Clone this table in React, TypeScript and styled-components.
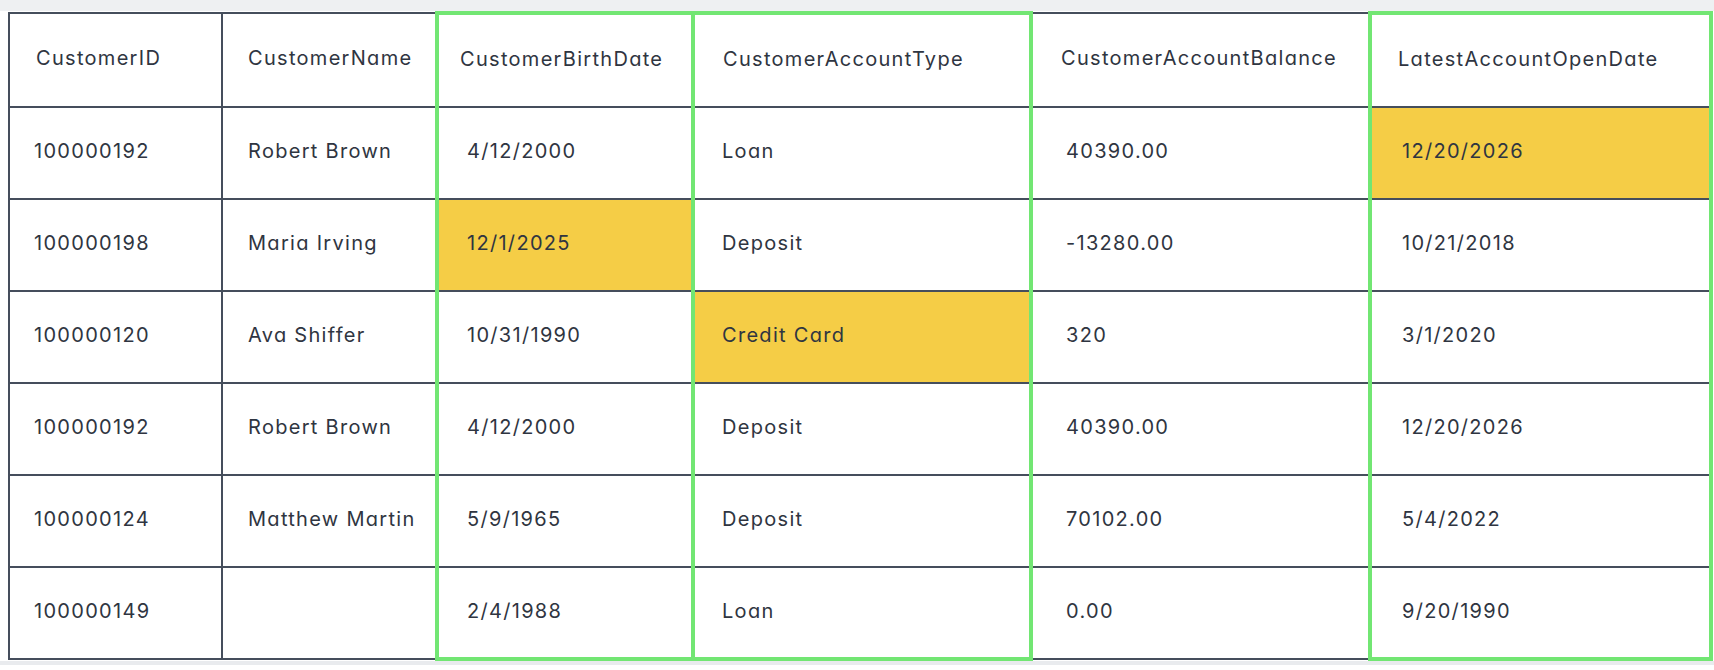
import React from "react";
import styled, { createGlobalStyle } from "styled-components";

const GlobalStyle = createGlobalStyle`
  html, body {
    margin: 0;
    padding: 0;
    background: #ffffff;
  }
  body {
    font-family: Inter, "Noto Sans", "Liberation Sans", sans-serif;
    font-feature-settings: "cv11" 1;
    color: #2f3541;
  }
`;

const Page = styled.div`
  width: 1714px;
  height: 670px;
  display: flex;
  flex-direction: column;
  background: #ffffff;
`;

const TopStrip = styled.div`
  height: 11px;
  background: #eef0f2;
  flex: none;
`;

const TableWrap = styled.div`
  padding: 0 0 0 8px;
  flex: none;
`;

const BottomStrip = styled.div`
  height: 4px;
  background: #e9ebee;
  flex: none;
`;

const Table = styled.table`
  border-collapse: collapse;
  table-layout: fixed;
  width: 1703px;
  border: 2px solid #454e5c;
`;

const Col = styled.col<{ $w: number }>`
  width: ${(p) => p.$w}px;
`;

const Row = styled.tr<{ $h: number }>`
  height: ${(p) => p.$h}px;
`;

const BORDER = "2px solid #454e5c";
const GREEN = "4px solid #72e673";

const Cell = styled.td<{
  $pad: number;
  $green?: boolean;
  $first?: boolean;
  $last?: boolean;
  $hl?: boolean;
}>`
  border: ${BORDER};
  ${(p) => (p.$green ? `border-left: ${GREEN}; border-right: ${GREEN};` : "")}
  ${(p) => (p.$green && p.$first ? `border-top: ${GREEN};` : "")}
  ${(p) => (p.$green && p.$last ? `border-bottom: ${GREEN};` : "")}
  background: ${(p) => (p.$hl ? "#f5cd46" : "#ffffff")};
  padding: 0 0 4px ${(p) => p.$pad}px;
  font-size: 20px;
  font-weight: 400;
  letter-spacing: 1.3px;
  color: #2f3541;
  vertical-align: middle;
  white-space: nowrap;
  overflow: hidden;
  text-align: left;
`;

const HeadCell = styled(Cell).attrs({ as: "th" })`
  font-weight: 400;
`;

type Column = {
  key: string;
  width: number;
  headPad: number;
  dataPad: number;
  green: boolean;
};

const columns: Column[] = [
  { key: "CustomerID", width: 213, headPad: 26, dataPad: 24, green: false },
  { key: "CustomerName", width: 215, headPad: 25, dataPad: 25, green: false },
  { key: "CustomerBirthDate", width: 256, headPad: 21, dataPad: 28, green: true },
  { key: "CustomerAccountType", width: 338, headPad: 28, dataPad: 27, green: true },
  { key: "CustomerAccountBalance", width: 339, headPad: 28, dataPad: 33, green: false },
  { key: "LatestAccountOpenDate", width: 341, headPad: 26, dataPad: 30, green: true },
];

type Rec = { values: string[]; hl?: number };

const rows: Rec[] = [
  { values: ["100000192", "Robert Brown", "4/12/2000", "Loan", "40390.00", "12/20/2026"], hl: 5 },
  { values: ["100000198", "Maria Irving", "12/1/2025", "Deposit", "-13280.00", "10/21/2018"], hl: 2 },
  { values: ["100000120", "Ava Shiffer", "10/31/1990", "Credit Card", "320", "3/1/2020"], hl: 3 },
  { values: ["100000192", "Robert Brown", "4/12/2000", "Deposit", "40390.00", "12/20/2026"] },
  { values: ["100000124", "Matthew Martin", "5/9/1965", "Deposit", "70102.00", "5/4/2022"] },
  { values: ["100000149", "", "2/4/1988", "Loan", "0.00", "9/20/1990"] },
];

export default function App() {
  return (
    <>
      <GlobalStyle />
      <Page>
        <TopStrip />
        <TableWrap>
          <Table>
            <colgroup>
              {columns.map((c) => (
                <Col key={c.key} $w={c.width} />
              ))}
            </colgroup>
            <thead>
              <Row $h={94}>
                {columns.map((c) => (
                  <HeadCell key={c.key} $pad={c.headPad} $green={c.green} $first>
                    {c.key}
                  </HeadCell>
                ))}
              </Row>
            </thead>
            <tbody>
              {rows.map((r, ri) => (
                <Row key={ri} $h={92}>
                  {r.values.map((v, ci) => (
                    <Cell
                      key={ci}
                      $pad={columns[ci].dataPad}
                      $green={columns[ci].green}
                      $last={ri === rows.length - 1}
                      $hl={r.hl === ci}
                    >
                      {v}
                    </Cell>
                  ))}
                </Row>
              ))}
            </tbody>
          </Table>
        </TableWrap>
        <BottomStrip />
      </Page>
    </>
  );
}
